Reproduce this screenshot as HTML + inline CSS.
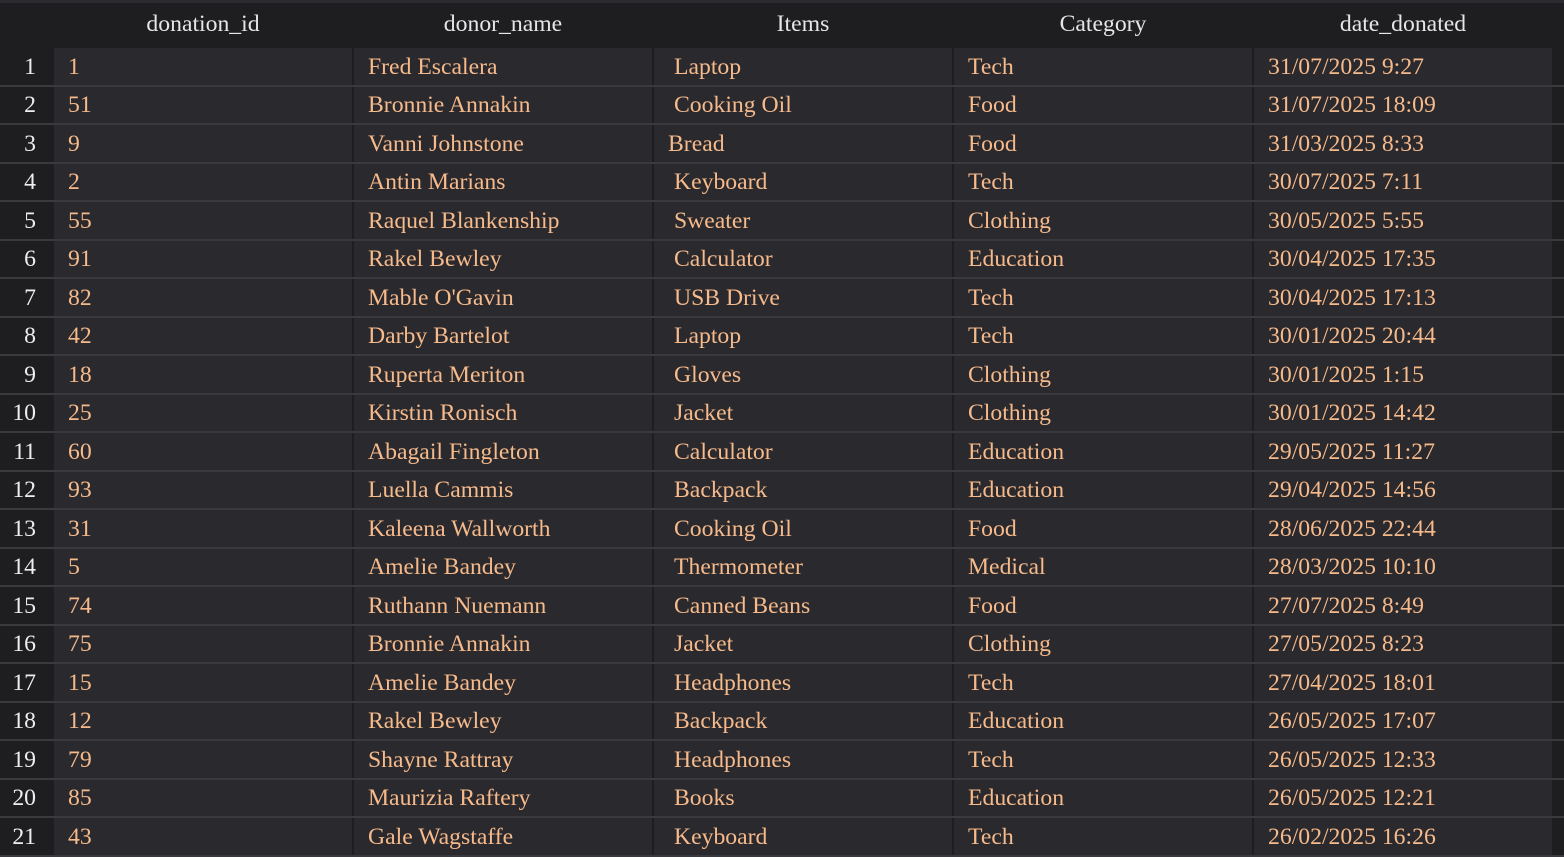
<!DOCTYPE html>
<html><head><meta charset="utf-8"><style>
*{margin:0;padding:0;box-sizing:border-box}
body{width:1564px;height:854px;overflow:hidden;background:#1e1d20;font-family:"Liberation Serif",serif;font-size:23.7px;}
.top{height:3px;background:#2c2b30}
.r{display:flex;height:38.5px;border-bottom:2px solid #3a393e}
.h{height:45px;border-bottom:1px solid #1e1d20;color:#e6e6e6}
.c{width:300px;border-left:2px solid #1e1d20;display:flex;align-items:center;padding-left:14px;padding-top:2px;background:#2a292e;color:#f6ba8b;white-space:pre}
.h .c{justify-content:center;padding:0 0 2px 0;background:#1e1d20;color:#e6e6e6}
.n{width:52px;display:flex;align-items:center;justify-content:flex-end;padding-right:16px;padding-top:2px;color:#eee;background:#1e1d20}
.c.i{padding-left:20px}
</style></head><body>
<div class="top"></div>
<div class="r h"><div class="n"></div><div class="c">donation_id</div><div class="c">donor_name</div><div class="c">Items</div><div class="c">Category</div><div class="c">date_donated</div></div>
<div class="r"><div class="n">1</div><div class="c">1</div><div class="c">Fred Escalera</div><div class="c i">Laptop</div><div class="c">Tech</div><div class="c">31/07/2025 9:27</div></div>
<div class="r"><div class="n">2</div><div class="c">51</div><div class="c">Bronnie Annakin</div><div class="c i">Cooking Oil</div><div class="c">Food</div><div class="c">31/07/2025 18:09</div></div>
<div class="r"><div class="n">3</div><div class="c">9</div><div class="c">Vanni Johnstone</div><div class="c">Bread</div><div class="c">Food</div><div class="c">31/03/2025 8:33</div></div>
<div class="r"><div class="n">4</div><div class="c">2</div><div class="c">Antin Marians</div><div class="c i">Keyboard</div><div class="c">Tech</div><div class="c">30/07/2025 7:11</div></div>
<div class="r"><div class="n">5</div><div class="c">55</div><div class="c">Raquel Blankenship</div><div class="c i">Sweater</div><div class="c">Clothing</div><div class="c">30/05/2025 5:55</div></div>
<div class="r"><div class="n">6</div><div class="c">91</div><div class="c">Rakel Bewley</div><div class="c i">Calculator</div><div class="c">Education</div><div class="c">30/04/2025 17:35</div></div>
<div class="r"><div class="n">7</div><div class="c">82</div><div class="c">Mable O'Gavin</div><div class="c i">USB Drive</div><div class="c">Tech</div><div class="c">30/04/2025 17:13</div></div>
<div class="r"><div class="n">8</div><div class="c">42</div><div class="c">Darby Bartelot</div><div class="c i">Laptop</div><div class="c">Tech</div><div class="c">30/01/2025 20:44</div></div>
<div class="r"><div class="n">9</div><div class="c">18</div><div class="c">Ruperta Meriton</div><div class="c i">Gloves</div><div class="c">Clothing</div><div class="c">30/01/2025 1:15</div></div>
<div class="r"><div class="n">10</div><div class="c">25</div><div class="c">Kirstin Ronisch</div><div class="c i">Jacket</div><div class="c">Clothing</div><div class="c">30/01/2025 14:42</div></div>
<div class="r"><div class="n">11</div><div class="c">60</div><div class="c">Abagail Fingleton</div><div class="c i">Calculator</div><div class="c">Education</div><div class="c">29/05/2025 11:27</div></div>
<div class="r"><div class="n">12</div><div class="c">93</div><div class="c">Luella Cammis</div><div class="c i">Backpack</div><div class="c">Education</div><div class="c">29/04/2025 14:56</div></div>
<div class="r"><div class="n">13</div><div class="c">31</div><div class="c">Kaleena Wallworth</div><div class="c i">Cooking Oil</div><div class="c">Food</div><div class="c">28/06/2025 22:44</div></div>
<div class="r"><div class="n">14</div><div class="c">5</div><div class="c">Amelie Bandey</div><div class="c i">Thermometer</div><div class="c">Medical</div><div class="c">28/03/2025 10:10</div></div>
<div class="r"><div class="n">15</div><div class="c">74</div><div class="c">Ruthann Nuemann</div><div class="c i">Canned Beans</div><div class="c">Food</div><div class="c">27/07/2025 8:49</div></div>
<div class="r"><div class="n">16</div><div class="c">75</div><div class="c">Bronnie Annakin</div><div class="c i">Jacket</div><div class="c">Clothing</div><div class="c">27/05/2025 8:23</div></div>
<div class="r"><div class="n">17</div><div class="c">15</div><div class="c">Amelie Bandey</div><div class="c i">Headphones</div><div class="c">Tech</div><div class="c">27/04/2025 18:01</div></div>
<div class="r"><div class="n">18</div><div class="c">12</div><div class="c">Rakel Bewley</div><div class="c i">Backpack</div><div class="c">Education</div><div class="c">26/05/2025 17:07</div></div>
<div class="r"><div class="n">19</div><div class="c">79</div><div class="c">Shayne Rattray</div><div class="c i">Headphones</div><div class="c">Tech</div><div class="c">26/05/2025 12:33</div></div>
<div class="r"><div class="n">20</div><div class="c">85</div><div class="c">Maurizia Raftery</div><div class="c i">Books</div><div class="c">Education</div><div class="c">26/05/2025 12:21</div></div>
<div class="r"><div class="n">21</div><div class="c">43</div><div class="c">Gale Wagstaffe</div><div class="c i">Keyboard</div><div class="c">Tech</div><div class="c">26/02/2025 16:26</div></div>
</body></html>
